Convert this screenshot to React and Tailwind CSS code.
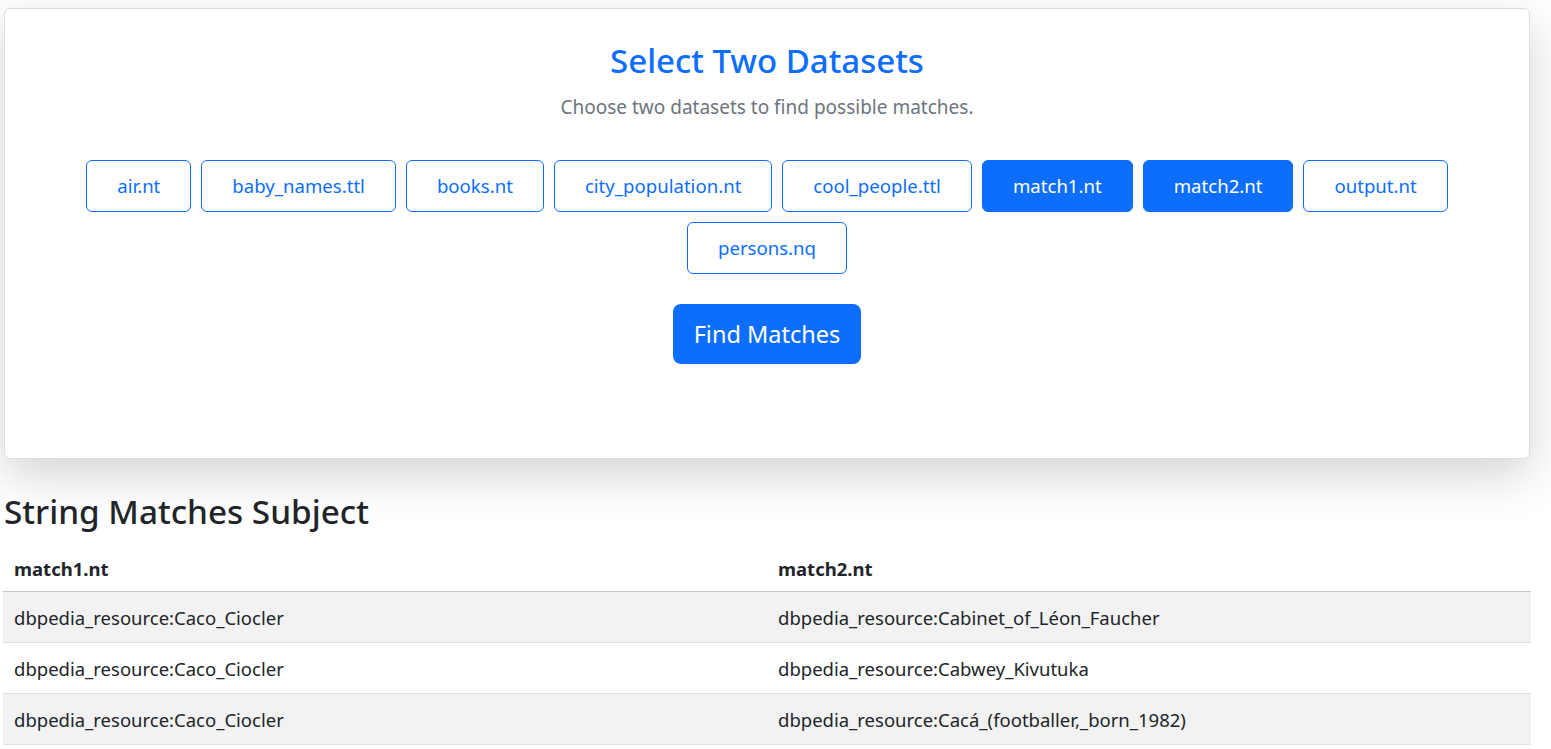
import { useState } from 'react';

const datasets = [
  'air.nt',
  'baby_names.ttl',
  'books.nt',
  'city_population.nt',
  'cool_people.ttl',
  'match1.nt',
  'match2.nt',
  'output.nt',
  'persons.nq'
];

const rows = [
  ['dbpedia_resource:Caco_Ciocler', 'dbpedia_resource:Cabinet_of_Léon_Faucher'],
  ['dbpedia_resource:Caco_Ciocler', 'dbpedia_resource:Cabwey_Kivutuka'],
  ['dbpedia_resource:Caco_Ciocler', 'dbpedia_resource:Cacá_(footballer,_born_1982)']
];

const App = () => {
  const [selected, setSelected] = useState(['match1.nt', 'match2.nt']);

  const toggle = (name) => {
    setSelected((prev) =>
      prev.includes(name) ? prev.filter((n) => n !== name) : [...prev, name].slice(-2)
    );
  };

  return (
    <div className="min-h-screen bg-white pl-[3px] pr-[20px] pt-2 text-[#212529] font-['Noto_Sans',sans-serif]">
      <div className="mx-[1px] rounded-md border border-[#dcdcdc] bg-white pt-[33px] pb-[94px] shadow-[0_1rem_3rem_rgba(0,0,0,0.175)]">
        <h1 className="text-center text-[33px] font-medium leading-[38px] text-[#0d6efd]">
          Select Two Datasets
        </h1>
        <p className="mt-[14px] text-center text-[19px] leading-[27px] text-[#6c757d]">
          Choose two datasets to find possible matches.
        </p>

        <div className="mx-auto mt-[39px] flex max-w-[1420px] flex-wrap justify-center gap-[10px]">
          {datasets.map((name) => (
            <button
              key={name}
              onClick={() => toggle(name)}
              className={`rounded-md border border-[#0d6efd] px-[30px] py-3 text-[18.6px] leading-[26px] ${
                selected.includes(name)
                  ? 'bg-[#0d6efd] text-white'
                  : 'bg-white text-[#0d6efd]'
              }`}
            >
              {name}
            </button>
          ))}
        </div>

        <div className="mt-[30px] flex justify-center">
          <button className="rounded-lg bg-[#0d6efd] px-[21px] py-3 text-[23.5px] leading-[36px] text-white">
            Find Matches
          </button>
        </div>
      </div>

      <h2 className="mt-[32px] pl-[1px] text-[33.3px] font-medium leading-[40px]">
        String Matches Subject
      </h2>

      <table className="mt-[15px] w-full table-fixed border-collapse text-[18.5px]">
        <thead>
          <tr className="border-b border-[#c8c8c8]">
            <th className="px-[11px] py-[10px] text-left font-bold leading-[25px]">match1.nt</th>
            <th className="px-[11px] py-[10px] text-left font-bold leading-[25px]">match2.nt</th>
          </tr>
        </thead>
        <tbody>
          {rows.map((row, i) => (
            <tr
              key={i}
              className={`border-b border-[#dee2e6] ${i % 2 === 0 ? 'bg-[#f2f2f2]' : 'bg-white'}`}
            >
              <td className="px-[11px] py-[12.5px] leading-[25px]">{row[0]}</td>
              <td className="px-[11px] py-[12.5px] leading-[25px]">{row[1]}</td>
            </tr>
          ))}
        </tbody>
      </table>
    </div>
  );
};

export default App;
